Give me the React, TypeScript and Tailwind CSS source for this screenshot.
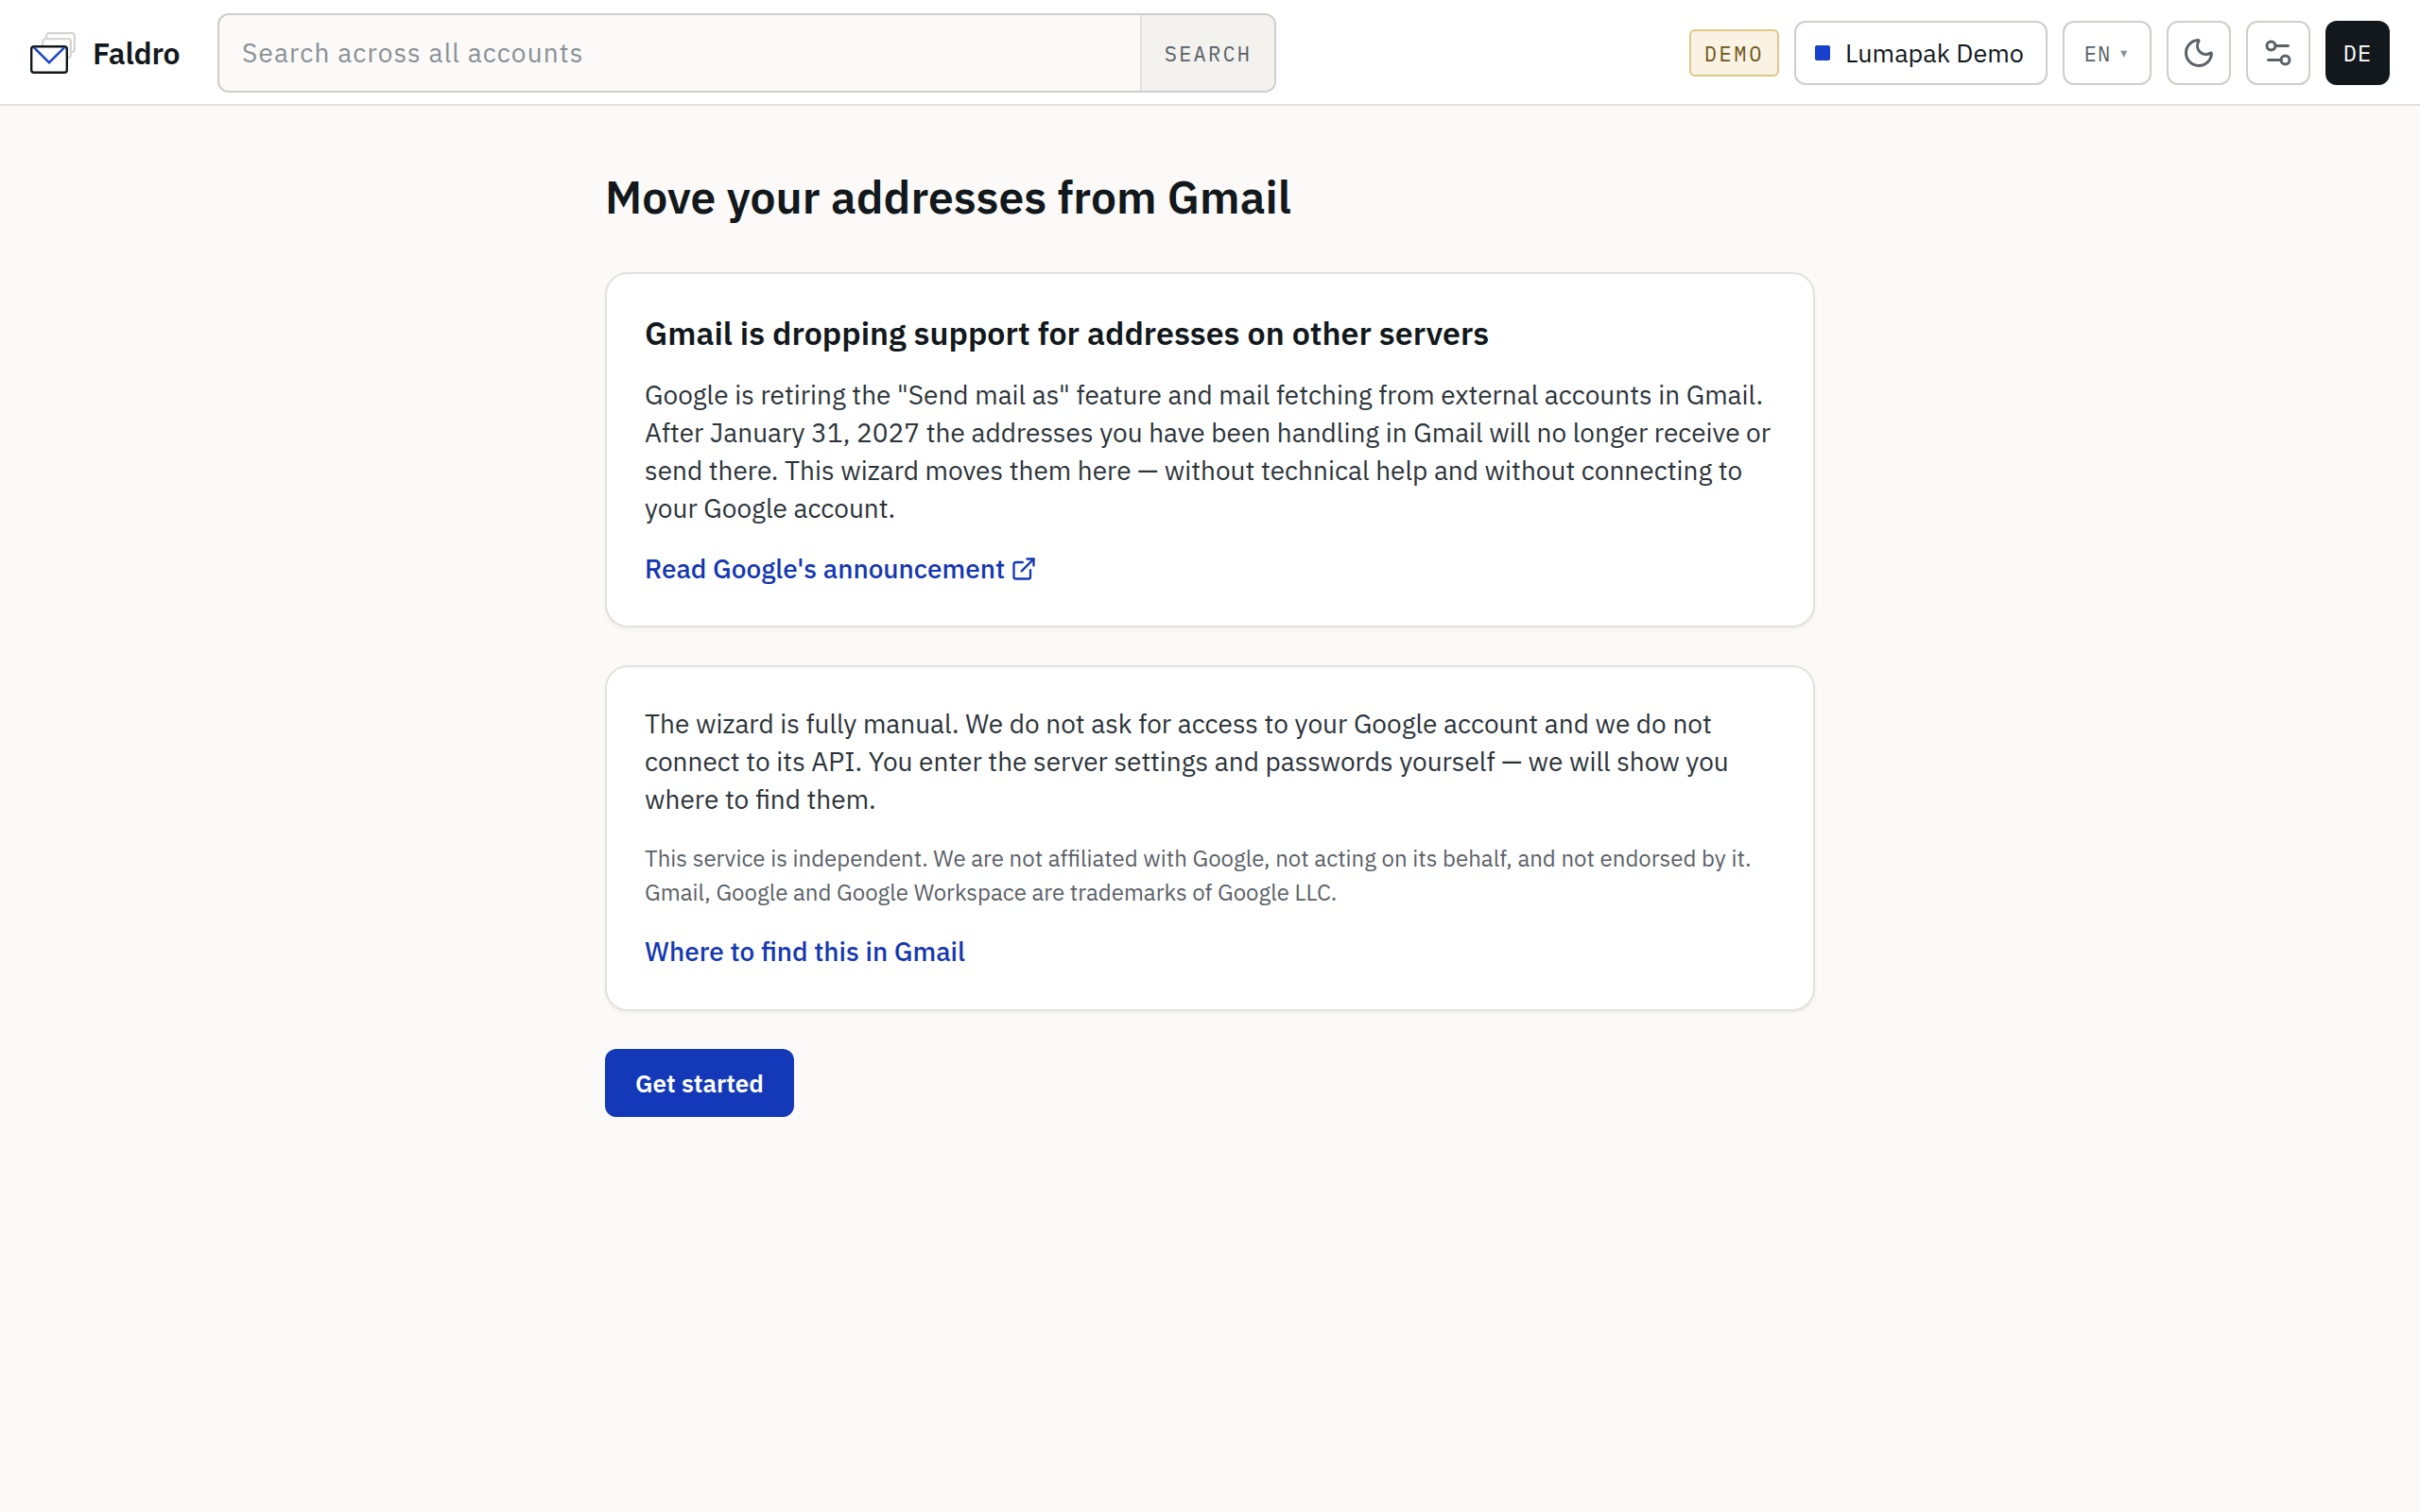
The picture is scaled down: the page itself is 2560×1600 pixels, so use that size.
import { ExternalLink, Moon, Settings2 } from 'lucide-react';
import type { ReactNode } from 'react';

function Logo() {
  return (
    <svg width="48" height="44" viewBox="0 0 48 44" fill="#ffffff" aria-hidden="true">
      <rect x="17.2" y="1.2" width="29.6" height="19.6" rx="2.5" stroke="#d6d5d1" strokeWidth="2.2" />
      <rect x="13.2" y="7.2" width="29.6" height="19.6" rx="2.5" stroke="#d6d5d1" strokeWidth="2.2" />
      <rect x="1.2" y="15.2" width="37.6" height="27.6" rx="2.8" stroke="#12181c" strokeWidth="2.4" />
      <path d="M4 16.4 20 32.2 36 16.4" fill="none" stroke="#1a45c4" strokeWidth="2.4" />
    </svg>
  );
}

function IconButton({ label, children }: { label: string; children: ReactNode }) {
  return (
    <button
      type="button"
      aria-label={label}
      className="flex size-[68px] shrink-0 items-center justify-center rounded-xl border-2 border-[#cfcecb] bg-white text-[#5a6167]"
    >
      {children}
    </button>
  );
}

function Header() {
  return (
    <header className="flex h-28 items-center border-b-2 border-[#e2e1de] bg-white px-8 pt-0.5">
      <a href="#" className="flex w-[198px] shrink-0 items-center gap-[18px]">
        <Logo />
        <span className="text-[32px] leading-10 font-semibold tracking-[-0.01em]">Faldro</span>
      </a>

      <form
        role="search"
        className="flex h-[84px] w-full max-w-[1120px] overflow-hidden rounded-xl border-2 border-[#cfcecb] bg-[#fbfaf8]"
      >
        <input
          type="search"
          aria-label="Search across all accounts"
          placeholder="Search across all accounts"
          className="min-w-0 flex-1 bg-transparent px-6 text-[28px] tracking-[0.04em] outline-none placeholder:text-[#899095]"
        />
        <button
          type="button"
          className="w-[142px] shrink-0 border-l-2 border-[#e2e1de] bg-[#f3f2ee] font-['IBM_Plex_Mono','Liberation_Mono',monospace] text-[22px] tracking-widest text-[#5a6167]"
        >
          SEARCH
        </button>
      </form>

      <div className="ml-auto flex shrink-0 items-center gap-4">
        <span className="flex h-[50px] items-center rounded-md border-2 border-[#dfc786] bg-[#faf3e3] px-3.5 font-['IBM_Plex_Mono','Liberation_Mono',monospace] text-[22px] tracking-[0.12em] text-[#6d5519]">
          DEMO
        </span>
        <button
          type="button"
          className="flex h-[68px] w-[268px] items-center gap-4 rounded-xl border-2 border-[#cfcecb] bg-white px-5 text-[27px]"
        >
          <span className="size-4 shrink-0 rounded-xs bg-[#1840cc]" />
          Lumapak Demo
        </button>
        <button
          type="button"
          className="flex h-[68px] w-[94px] items-center justify-center gap-2 rounded-xl border-2 border-[#cfcecb] bg-white font-['IBM_Plex_Mono','Liberation_Mono',monospace] text-[22px] tracking-wider text-[#5a6167]"
        >
          EN
          <span className="text-lg text-[#899095]">▾</span>
        </button>
        <IconButton label="Dark mode">
          <Moon size={36} strokeWidth={2} />
        </IconButton>
        <IconButton label="Settings">
          <Settings2 size={36} strokeWidth={2} />
        </IconButton>
        <button
          type="button"
          className="size-[68px] rounded-xl bg-[#12181c] font-['IBM_Plex_Mono','Liberation_Mono',monospace] text-2xl tracking-wider text-white"
        >
          DE
        </button>
      </div>
    </header>
  );
}

function Card({ children }: { children: ReactNode }) {
  return (
    <section className="rounded-3xl border-2 border-[#e2e1de] bg-white p-10 shadow-[0_2px_4px_rgba(18,24,28,0.05)]">
      {children}
    </section>
  );
}

export default function App() {
  return (
    <div className="min-h-screen bg-[#fbfaf8] font-['IBM_Plex_Sans','Roboto',sans-serif] text-[#12181c]">
      <Header />

      <main className="mx-auto flex max-w-[1280px] flex-col gap-10 pt-16 pb-20">
        <h1 className="mb-2 text-5xl leading-[64px] font-semibold">Move your addresses from Gmail</h1>

        <Card>
          <h2 className="text-[34px] leading-[44px] font-semibold">
            Gmail is dropping support for addresses on other servers
          </h2>
          <p className="mt-6 text-[28px] leading-10 text-[#2c343a]">
            Google is retiring the "Send mail as" feature and mail fetching from external accounts in Gmail.
            After January 31, 2027 the addresses you have been handling in Gmail will no longer receive or
            send there. This wizard moves them here — without technical help and without connecting to your
            Google account.
          </p>
          <a
            href="#"
            className="mt-6 flex items-center gap-1.5 text-[28px] leading-10 font-medium text-[#1437b2]"
          >
            Read Google's announcement
            <ExternalLink size={28} />
          </a>
        </Card>

        <Card>
          <p className="text-[28px] leading-10 text-[#2c343a]">
            The wizard is fully manual. We do not ask for access to your Google account and we do not
            connect to its API. You enter the server settings and passwords yourself — we will show you
            where to find them.
          </p>
          <p className="mt-6 text-2xl leading-9 text-[#5a6167]">
            This service is independent. We are not affiliated with Google, not acting on its behalf, and not
            endorsed by it. Gmail, Google and Google Workspace are trademarks of Google LLC.
          </p>
          <button type="button" className="mt-6 block h-[42px] text-[28px] leading-10 font-medium text-[#1437b2]">
            Where to find this in Gmail
          </button>
        </Card>

        <button
          type="button"
          className="h-18 self-start rounded-xl bg-[#1339b8] px-8 text-[26px] font-semibold text-white"
        >
          Get started
        </button>
      </main>
    </div>
  );
}
